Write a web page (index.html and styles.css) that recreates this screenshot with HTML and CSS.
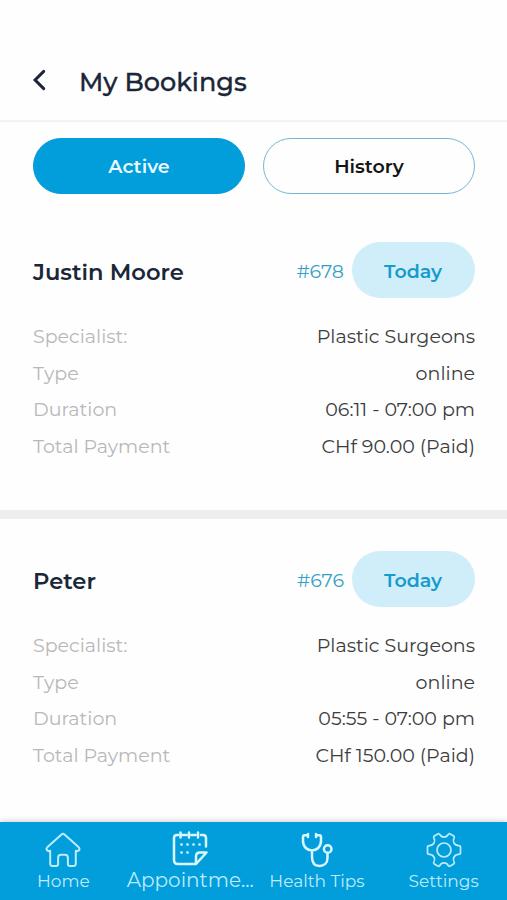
FILE: index.html
```html
<!DOCTYPE html>
<html lang="en">
<head>
<meta charset="utf-8">
<meta name="viewport" content="width=device-width, initial-scale=1">
<title>My Bookings</title>
<link rel="stylesheet" href="styles.css">
</head>
<body>
<div class="app">
  <header class="header">
    <svg class="back" width="14" height="22" viewBox="0 0 14 22"><path d="M11.700 2.400 3.100 11l8.600 8.600"/></svg>
    <h1 class="title">My Bookings</h1>
  </header>
  <main class="content">
    <div class="tabs">
      <button class="tab tab-active">Active</button>
      <button class="tab">History</button>
    </div>
    <section class="booking">
      <div class="booking-head">
        <h2 class="name">Justin Moore</h2>
        <span class="number">#678</span>
        <span class="badge">Today</span>
      </div>
      <dl class="details">
        <div class="row"><dt>Specialist:</dt><dd>Plastic Surgeons</dd></div>
        <div class="row"><dt>Type</dt><dd>online</dd></div>
        <div class="row"><dt>Duration</dt><dd>06:11 - 07:00 pm</dd></div>
        <div class="row"><dt>Total Payment</dt><dd>CHf 90.00 (Paid)</dd></div>
      </dl>
    </section>
    <section class="booking">
      <div class="booking-head">
        <h2 class="name">Peter</h2>
        <span class="number">#676</span>
        <span class="badge">Today</span>
      </div>
      <dl class="details">
        <div class="row"><dt>Specialist:</dt><dd>Plastic Surgeons</dd></div>
        <div class="row"><dt>Type</dt><dd>online</dd></div>
        <div class="row"><dt>Duration</dt><dd>05:55 - 07:00 pm</dd></div>
        <div class="row"><dt>Total Payment</dt><dd>CHf 150.00 (Paid)</dd></div>
      </dl>
    </section>
  </main>
  <nav class="nav">
    <a class="item">
      <svg width="36" height="36" viewBox="0 0 36 36"><path d="M16.500 2.400Q18 1.100 19.500 2.400L33.500 15.100Q35.200 16.900 34 18.300Q32.700 19.700 30.800 18.700V31.500Q30.800 34 28.500 34H24.800Q22.900 34 22.900 32V26Q22.900 22.700 20 22.700H16Q13.100 22.700 13.100 26V32Q13.100 34 11.200 34H7.500Q5.200 34 5.200 31.500V18.700Q3.300 19.700 2 18.300Q.8 16.900 2.500 15.100Z"/></svg>
      <span>Home</span>
    </a>
    <a class="item item-current">
      <svg width="36" height="36" viewBox="0 0 36 36"><path class="bold" d="M6 5H5Q2 5 2 8V30Q2 34 6 34H24L34.500 22.500H28Q24 22.500 24 26.500V34M10.500 5h4M19.500 5h4M29 5h2Q34 5 34 8V16.500M8.500 2.500v5M17 2.500v5M26 2.500v5"/><path class="dots" d="M9.500 14.500h.1M15.500 14.500h.1M21.500 14.500h.1M27.500 14.500h.1M9.500 22.500h.1M15.500 22.500h.1"/></svg>
      <span>Appointme...</span>
    </a>
    <a class="item">
      <svg width="36" height="36" viewBox="0 0 36 36"><path class="bold" d="M9 2V5M9 3.300H5.500Q4 3.300 4 5V9C4 15 8.500 18.500 13 18.500S22 15 22 9V5Q22 3.300 20.500 3.300H17M17 2V5M13 18.500V25C13 31 16 34 20.500 34S28.500 31 28.500 26V21"/><circle class="bold" cx="28.700" cy="17" r="3.800"/></svg>
      <span>Health Tips</span>
    </a>
    <a class="item item-settings">
      <svg width="36" height="36" viewBox="0 0 36 36"><path d="M11.800 2Q13 1.200 13.800 2.500C15.500 5.900 20.500 5.900 22.200 2.500Q23 1.200 24.200 2L27.700 4Q28.800 4.700 28.100 6C26 9.300 28.500 13.600 32.500 13.600Q34.500 13.600 34.500 15V21Q34.500 22.400 32.500 22.400C28.500 22.400 26 26.700 28.100 30Q28.800 31.300 27.700 32L24.200 34Q23 34.800 22.200 33.500C20.500 30.100 15.500 30.100 13.800 33.500Q13 34.800 11.800 34L8.300 32Q7.200 31.300 7.900 30C10 26.700 7.500 22.400 3.500 22.400Q1.500 22.400 1.500 21V15Q1.500 13.600 3.500 13.600C7.500 13.600 10 9.300 7.900 6Q7.200 4.700 8.300 4Z"/><circle cx="18" cy="18" r="7"/></svg>
      <span>Settings</span>
    </a>
  </nav>
</div>
</body>
</html>
```
FILE: styles.css
```css
* { box-sizing: border-box; }
body { margin: 0; background: #fefefe; font-family: Montserrat, Inter, "Liberation Sans", sans-serif; }
h1, h2, dl, dd { margin: 0; }
.app { height: 900px; display: flex; flex-direction: column; overflow: hidden; }
.header { height: 122px; padding: 40px 32px 0; display: flex; align-items: center; border-bottom: 2px solid #f3f3f3; }
.back { fill: none; stroke: #1b2738; stroke-width: 3; stroke-linecap: round; }
.title { margin: 3px 0 0 33px; font-size: 25.5px; line-height: 34px; font-weight: 500; color: #1b2738; -webkit-text-stroke: .3px #1b2738; white-space: nowrap; }
.content { flex: 1; min-height: 0; overflow: hidden; }
.tabs { display: flex; gap: 18px; padding: 16px 32px 0 33px; }
.tab { flex: 1; height: 56px; border: 1px solid #72b8d0; border-radius: 28px; background: #fefefe; padding: 2px 0 0; font: 600 19px/24px Montserrat, Inter, sans-serif; color: #141414; }
.tab-active { background: #029ddb; border-color: #029ddb; color: #e8faff; }
.booking { height: 325px; padding: 48px 32px 0 33px; border-bottom: 9px solid #eee; }
.booking + .booking { height: 303px; padding-top: 32px; border-bottom: 0; }
.booking-head { display: flex; align-items: center; height: 56px; }
.name { flex: 1; font-size: 22.6px; font-weight: 600; color: #1b2738; padding-top: 4px; }
.number { font-size: 19px; color: #35a0c6; padding-top: 3px; margin-right: 8px; }
.badge { width: 123px; height: 56px; padding-right: 1px; border-radius: 28px; background: #d0eef9; color: #149ccb; font-size: 19px; font-weight: 600; line-height: 59px; text-align: center; }
.details { padding-top: 21px; }
.row { display: flex; justify-content: space-between; height: 36.5px; line-height: 36.5px; font-size: 19.05px; color: #3c3c3c; white-space: nowrap; }
.row dt { color: #b8b8b8; }
.nav { position: relative; height: 78px; flex: none; display: grid; grid-template-columns: repeat(4, 1fr); background: #029ddb; box-shadow: 0 -1px 6px rgba(0,0,0,.18); }
.item { display: flex; flex-direction: column; align-items: center; padding-top: 10px; color: #bcecfb; font-size: 17px; line-height: 26px; white-space: nowrap; }
.item svg { fill: none; stroke: #bcecfb; stroke-width: 2; stroke-linecap: round; stroke-linejoin: round; }
.item .bold { stroke: #d9f7ff; stroke-width: 2.5; }
.item .dots { stroke: #d9f7ff; stroke-width: 2.6; }
.item-current { padding-top: 8px; font-size: 20px; line-height: 28px; }
.item-settings svg { stroke-width: 1.7; }
```
